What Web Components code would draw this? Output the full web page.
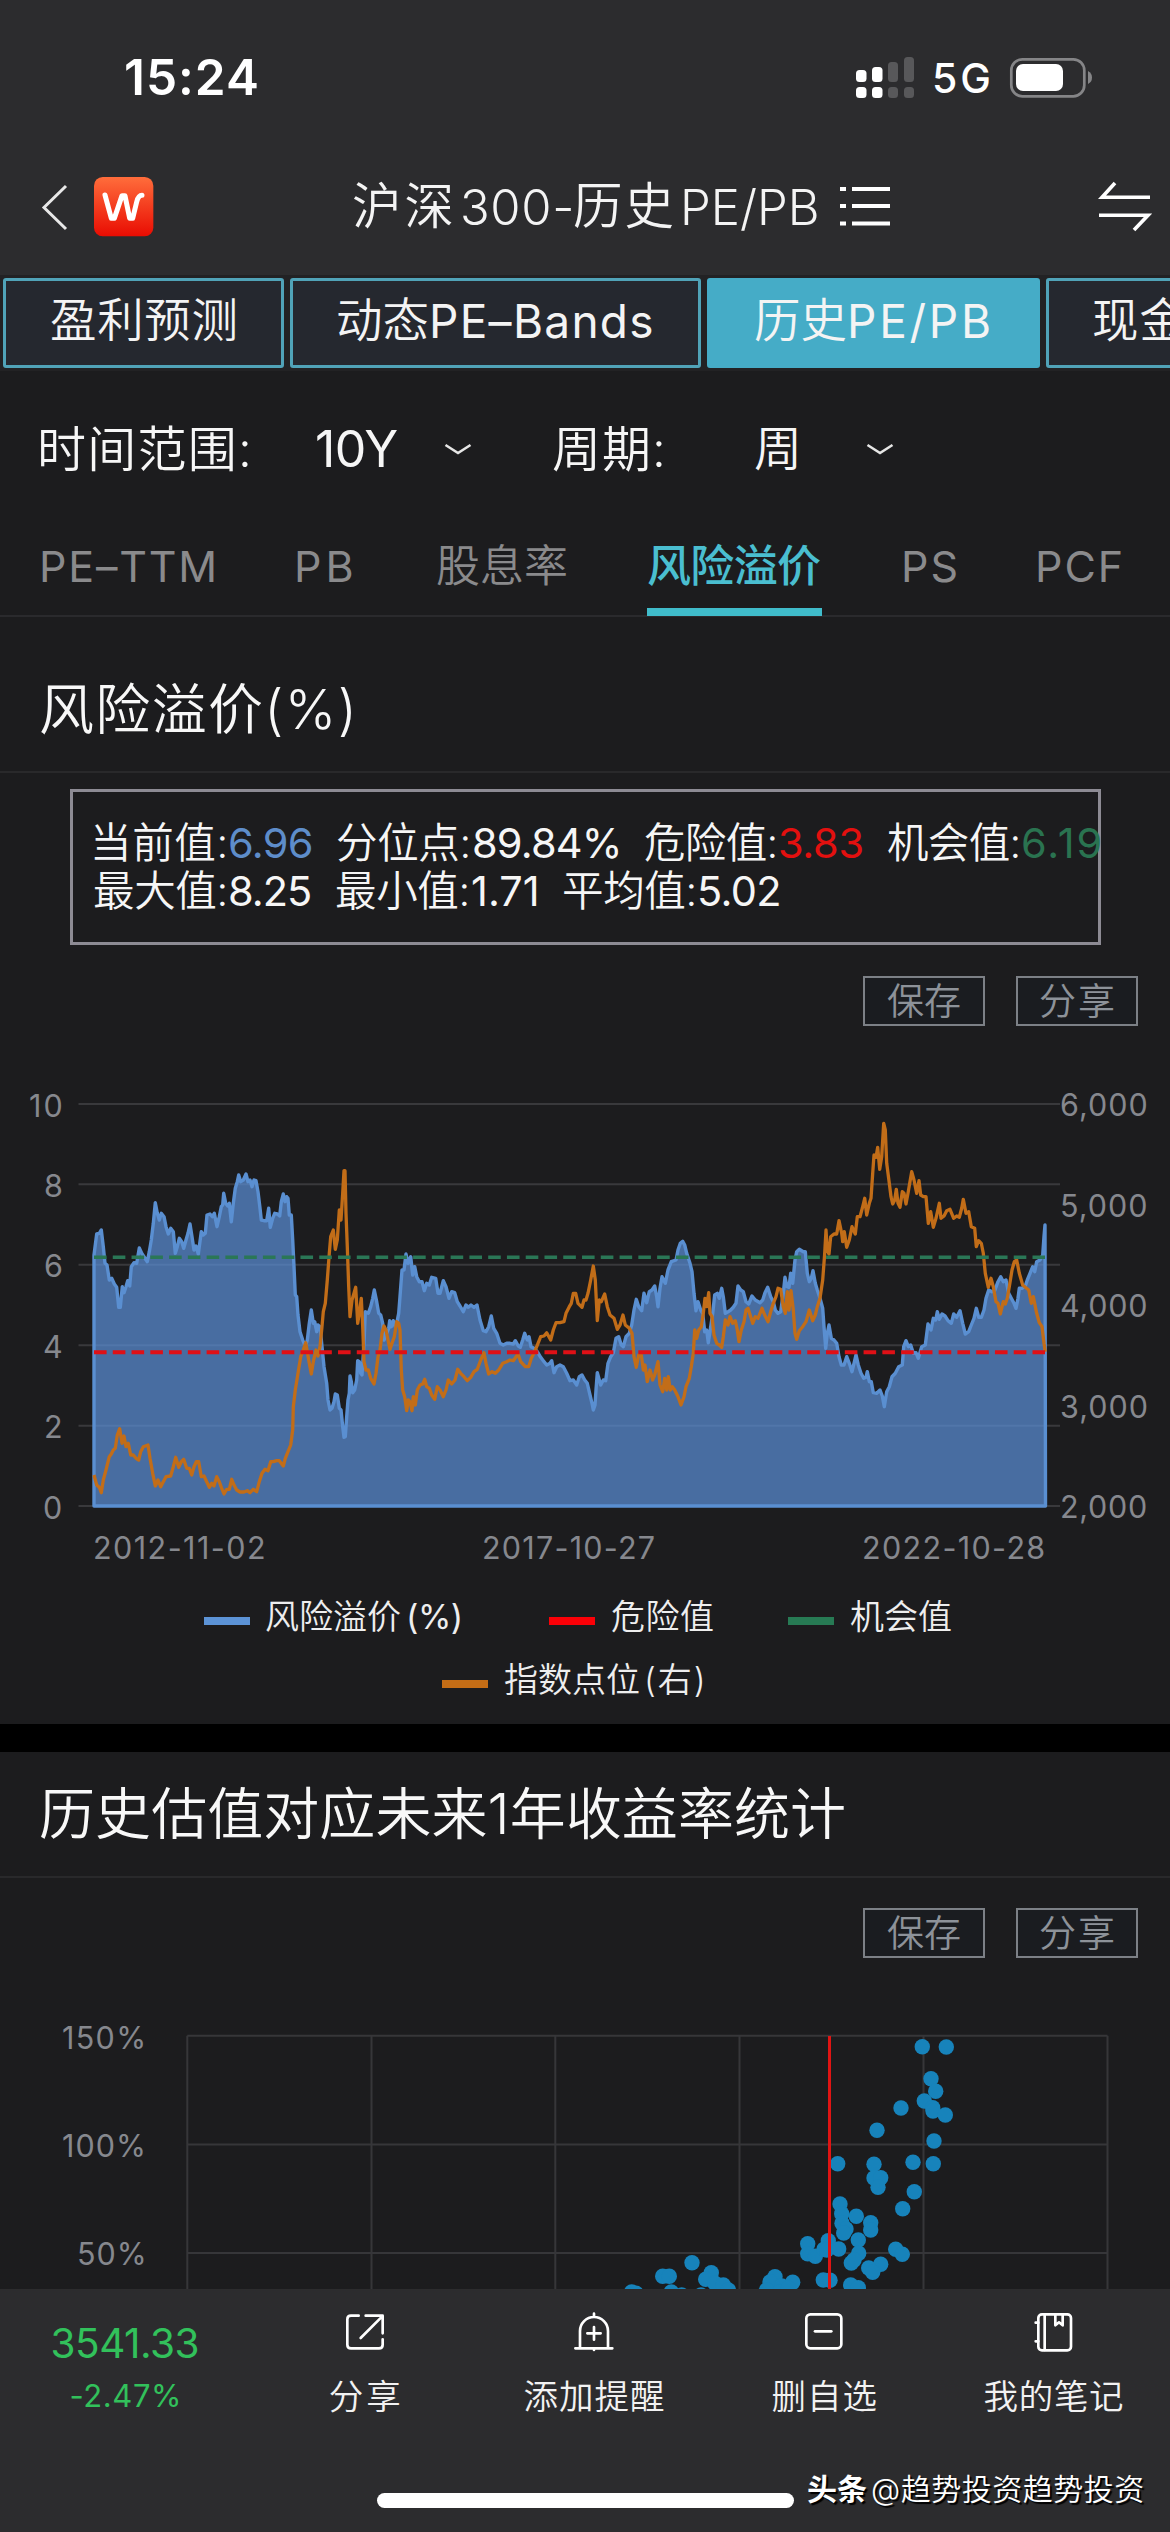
<!DOCTYPE html>
<html lang="zh-CN">
<head>
<meta charset="utf-8">
<meta name="viewport" content="width=1170">
<title>沪深300-历史PE/PB</title>
<style>
body{margin:0;background:#1c1c1e;width:1170px;height:2532px;overflow:hidden;font-family:Inter,"Noto Sans CJK SC",sans-serif;font-optical-sizing:none}
</style>
</head>
<body>
<valuation-page></valuation-page>
<script>
const FONT='Inter,"Noto Sans CJK SC",sans-serif';
const board=document.createElement('canvas');
board.width=960;board.height=100;
const pen=board.getContext('2d',{willReadFrequently:true});
/* Left bearing and width of the ink of a line, read from its pixels. */
function inkOf(t,weight,size){
  pen.font=`${weight} ${size}px ${FONT}`;
  pen.clearRect(0,0,960,100);
  pen.fillText(t,20,70);
  const d=pen.getImageData(0,0,960,100).data;
  let a=-1,z=-1;
  for(let x=0;x<960;x++)for(let y=0;y<100;y++)if(d[(y*960+x)*4+3]>70){if(a<0)a=x;z=x;break}
  return{left:a-20,width:z-a+1};
}
function define(name,html){
  customElements.define(name,class extends HTMLElement{
    connectedCallback(){
      if(this.shadowRoot)return;
      const r=this.attachShadow({mode:'open'});
      r.innerHTML=typeof html==='function'?html(this):html;
    }
  });
}

/* One line of text whose box hugs the ink: w = ink width, s = size, g = gap before it. */
customElements.define('ui-text',class extends HTMLElement{
  connectedCallback(){
    if(this.shadowRoot)return;
    const r=this.attachShadow({mode:'open'});
    const t=this.textContent,latin=/^[\x00-\x7f–]+$/.test(t);
    const s=+this.getAttribute('s'),w=+this.getAttribute('w'),b=this.getAttribute('b')||(latin?'400':'350');
    const ink=inkOf(t,b,s);
    const ls=(w-ink.width)/Math.max(1,[...t].length-1);
    r.innerHTML=`<style>:host{display:block;flex:none;width:${w}px;height:${s}px;margin-left:${this.getAttribute('g')||0}px;
      color:${this.getAttribute('c')||'inherit'};font:${b} ${s}px/1 ${FONT};font-optical-sizing:none;white-space:pre}
      span{display:block;width:max-content;margin-left:${-ink.left}px;letter-spacing:${ls}px}</style><span><slot></slot></span>`;
  }
});

define('ui-row',el=>`<style>:host{display:flex;align-items:center;box-sizing:border-box;height:${el.getAttribute('h')}px}</style><slot></slot>`);

define('status-bar',`<style>:host{display:flex;align-items:center;height:156px;color:#fff}
  svg{display:block;flex:none}</style>
  <ui-text g="126" w="131" s="49.5" b="600">15:24</ui-text>
  <svg style="margin-left:599px" width="60" height="44" viewBox="856 56 60 44">
    <g fill="#fff"><rect x="856" y="70" width="10.5" height="12" rx="3.5"/><rect x="872" y="67" width="10.5" height="15" rx="3.5"/>
    <rect x="856" y="87" width="10.5" height="11" rx="3.5"/><rect x="872" y="87" width="10.5" height="11" rx="3.5"/></g>
    <g fill="#58585a"><rect x="888" y="62" width="10" height="20" rx="3.5"/><rect x="904" y="57" width="10" height="25" rx="3.5"/>
    <rect x="888" y="87" width="10" height="11" rx="3.5"/><rect x="904" y="87" width="10" height="11" rx="3.5"/></g></svg>
  <ui-text g="19" w="54" s="41" b="450">5G</ui-text>
  <svg style="margin-left:20px" width="84" height="42" viewBox="1008 57 84 42">
    <rect x="1010.3" y="59.3" width="73" height="37" rx="11" fill="none" stroke="#858587" stroke-width="2.7"/>
    <rect x="1015" y="64" width="47" height="27" rx="7" fill="#fff"/><path d="M1087 71q4 2 4 6.500t-4 6.500z" fill="#858587"/></svg>`);

define('nav-bar',`<style>:host{display:flex;align-items:center;height:102px;color:#f4f4f4}svg{display:block;flex:none}</style>
  <svg style="margin-left:40px" width="30" height="54" viewBox="40 180 30 54"><path d="M66 186L44 207.500L66 229" fill="none" stroke="#e8e8e8" stroke-width="3"/></svg>
  <svg style="margin-left:24px" width="60" height="60" viewBox="222 53 180 180"><defs><linearGradient id="g" x2="0" y2="1"><stop stop-color="#ff6d3b"/><stop offset="1" stop-color="#e90c02"/></linearGradient></defs>
    <rect x="222" y="53" width="178" height="178" rx="26" fill="url(#g)"/><path d="M255 107L274 177H283L306 109H315L329 177H338L350 128Q355 108 366 108" fill="none" stroke="#fff" stroke-width="15" stroke-linecap="round" stroke-linejoin="round"/></svg>
  <ui-text g="200" w="97" s="49.5">沪深</ui-text><ui-text g="12" w="108" s="49" b="350">300-</ui-text><ui-text g="4" w="97" s="49.5">历史</ui-text><ui-text g="12" w="133" s="49" b="350">PE/PB</ui-text>
  <svg style="margin-left:23px" width="50" height="40" viewBox="840 187 50 40"><path d="M840 189h6M852 189h38M840 206h6M852 206h38M840 223.500h6M852 223.500h38" stroke="#fff" stroke-width="4"/></svg>
  <svg style="margin-left:208px" width="54" height="54" viewBox="1097 180 54 54"><path d="M1149 197.300H1101L1114 183M1098 215.300H1147L1133 230" fill="none" stroke="#fff" stroke-width="3.600"/></svg>`);

define('page-tab',el=>`<style>:host{display:flex;align-items:center;box-sizing:border-box;flex:none;height:90px;padding-bottom:5px;
  border:3px solid ${el.hasAttribute('on')?'#45acc7':'#50a3b8'};background:${el.hasAttribute('on')?'#45acc7':'#25282f'};color:#f4f4f4;border-radius:3px;width:${el.getAttribute('width')}px}</style><slot></slot>`);
define('page-tabs',`<style>:host{display:flex;height:96px;padding:3px;box-sizing:border-box;gap:6px;background:#222224;overflow:hidden}</style>
  <page-tab width="281"><ui-text g="46" w="183" s="46.5">盈利预测</ui-text></page-tab>
  <page-tab width="411"><ui-text g="45" w="89" s="46.500">动态</ui-text><ui-text g="6" w="218" s="46">PE–Bands</ui-text></page-tab>
  <page-tab width="333" on><ui-text g="46" w="89" s="46.500">历史</ui-text><ui-text g="6" w="138" s="46">PE/PB</ui-text></page-tab>
  <page-tab width="300"><ui-text g="45" w="90" s="46.500">现金</ui-text></page-tab>`);

define('chevron-down',el=>`<style>:host{display:block;flex:none;margin-left:${el.getAttribute('g')}px}svg{display:block}</style>
  <svg width="28" height="14" viewBox="0 0 28 14"><path d="M1.500 3L14 11L26.500 3" fill="none" stroke="#e6e6e6" stroke-width="2.600"/></svg>`);
define('filter-row',`<style>:host{display:flex;align-items:center;height:156px;color:#f6f6f6}</style>
  <ui-text g="41" w="207" s="49">时间范围:</ui-text><ui-text g="69" w="80" s="50">10Y</ui-text><chevron-down g="47"></chevron-down>
  <ui-text g="82" w="108" s="49">周期:</ui-text><ui-text g="94" w="43" s="48">周</ui-text><chevron-down g="67"></chevron-down>`);

define('metric-tab',el=>`<style>:host{display:flex;flex-direction:column;justify-content:space-between;flex:none;height:89px;margin-left:${el.getAttribute('g')}px}
  div{height:78px;display:flex;align-items:center;padding:0 ${el.hasAttribute('on')?2:0}px}i{display:block;height:8px;background:${el.hasAttribute('on')?'#40bccb':'none'}}</style><div><slot></slot></div><i></i>`);
define('metric-tabs',`<style>:host{display:flex;box-sizing:border-box;height:90px;color:#8a8a8c;border-bottom:2px solid #2a2a2d}</style>
  <metric-tab g="43"><ui-text w="171" s="43">PE–TTM</ui-text></metric-tab>
  <metric-tab g="84"><ui-text w="53" s="43">PB</ui-text></metric-tab>
  <metric-tab g="87"><ui-text w="128" s="44">股息率</ui-text></metric-tab>
  <metric-tab g="81" on><ui-text w="171" s="44" b="450" c="#4abed0">风险溢价</ui-text></metric-tab>
  <metric-tab g="83"><ui-text w="51" s="43">PS</ui-text></metric-tab>
  <metric-tab g="83"><ui-text w="82" s="43">PCF</ui-text></metric-tab>`);

define('section-title',`<style>:host{display:flex;align-items:center;box-sizing:content-box;height:124px;border-bottom:2px solid #29292b;color:#f8f8f8;padding-left:41px}</style><slot></slot>`);

define('stat-box',`<style>:host{display:block;box-sizing:border-box;margin:16px 0 0 70px;width:1031px;height:156px;border:3px solid #8d8b94;padding:28px 0 0 22px;color:#f6f6f6}</style>
  <ui-row h="48"><ui-text w="130" s="41.5">当前值:</ui-text><ui-text g="5" w="81" s="41.5" c="#5e8dca">6.96</ui-text>
  <ui-text g="27" w="130" s="41.5">分位点:</ui-text><ui-text g="6" w="144" s="41.5">89.84%</ui-text>
  <ui-text g="27" w="130" s="41.5">危险值:</ui-text><ui-text g="5" w="82" s="41.5" c="#e3100f">3.83</ui-text>
  <ui-text g="26" w="130" s="41.5">机会值:</ui-text><ui-text g="5" w="77" s="41.5" c="#2a7350">6.19</ui-text></ui-row>
  <ui-row h="48"><ui-text w="130" s="41.5">最大值:</ui-text><ui-text g="5" w="80" s="41.5">8.25</ui-text>
  <ui-text g="27" w="130" s="41.5">最小值:</ui-text><ui-text g="6" w="63" s="41.5">1.71</ui-text>
  <ui-text g="28" w="130" s="41.5">平均值:</ui-text><ui-text g="6" w="79" s="41.5">5.02</ui-text></ui-row>`);

define('chart-actions',`<style>:host{display:flex;justify-content:flex-end;gap:31px;padding-right:32px;height:50px;color:#8d9299}
  div{box-sizing:border-box;width:122px;border:2px solid #7c8086;background:#1a1c20;display:flex;align-items:center;justify-content:center}</style>
  <div><ui-text w="72" s="37">保存</ui-text></div><div><ui-text w="72" s="37">分享</ui-text></div>`);

/* Traced series: each run starts at pixel x0; its x,y pairs are thirds of a pixel. */
const premium=[[60,'102,525 110,462 118,460 124,450 130,500 135,550 141,555 148,600 155,595 163,612 170,622 176,682 181,682 187,620 192,638 198,620 203,602 209,618 214,560 222,548 230,550 238,504 245,520 252,530 262,545 268,515 274,480 280,430 286,368 292,400 298,420 304,400 312,410 318,440 325,462 332,445 340,455 346,520 352,500 358,475 365,485 371,505 378,480 384,460 390,432 396,470 402,510 408,498 415,522 424,455 430,465 436,460 441,405 450,402 457,410 463,400 471,440 478,410 484,380 488,375 491,340 497,370 503,378 508,370 514,425 520,370 526,325 532,305 536,285 542,305 550,300 558,282 564,305 570,300 576,320 582,300 588,302 594,335 600,385 604,420 612,422 620,422 626,385 631,442 638,415 644,400 652,402 659,408 664,365 670,342 675,365 680,350 684,355 688,405 694,405 698,480 702,560 706,645 710,650 714,705 720,755 728,780 736,800 742,780 748,730 754,690 760,730 764,725 770,755 774,735 780,740 786,800 792,860 800,910 804,960 810,990 816,985 822,965 826,942 832,945 838,985 843,990 848,1040 852,1072 856,1070 860,1010 864,960 868,940 870,888 874,905 878,938 884,930 890,900 893,842 898,845 902,880 906,885 912,790 916,695 925,700 932,680 938,655 943,630 950,665 956,700 962,705 968,730 972,780 980,760 986,745 989,722 994,740 1000,722 1006,740 1010,730 1016,700 1020,650 1026,570'],
[400,'12,570 18,522 24,550 32,530 38,585 44,560 50,590 58,605 66,605 73,632 80,610 88,615 95,592 107,595 114,640 120,640 130,602 138,620 147,655 155,635 164,638 172,665 180,678 190,695 198,675 205,682 213,675 222,682 231,675 240,720 250,752 258,755 266,740 274,708 281,745 290,760 300,790 310,795 320,790 330,790 340,792 346,782 355,798 361,802 368,780 374,760 382,780 387,770 393,800 402,805 412,815 422,832 432,845 440,855 450,850 455,842 462,878 470,860 480,855 490,860 500,880 510,902 520,900 530,915 538,890 546,885 554,900 562,910 570,945 576,970 580,990 585,975 588,930 592,878 598,900 602,915 610,900 617,902 624,850 632,830 640,818 648,775 656,770 664,795 670,800 678,770 688,760 695,735 702,690 709,658 716,680 725,692 732,640 740,668 748,635 756,630 764,618 770,650 774,680 780,625 786,590 796,610 804,570 814,545 828,540 834,510 841,490 848,484 854,495 860,520 870,550 876,575 882,640 888,692 894,665 902,690 908,700 914,755 920,750 925,788 932,740 938,700 944,645 952,640 958,655 965,625 970,650 976,700 984,695 992,690 1000,682 1008,670 1014,618 1022,630 1030,635 1038,665 1046,672 1056,648 1066,660 1080,668 1088,660 1095,638 1103,622 1112,650 1120,665 1126,690'],
[740,'114,700 122,695 130,640 135,592 141,620 147,622 152,580 158,610 165,540 170,515 178,508 190,515 196,515 202,580 208,605 214,595 219,572 226,610 232,630 240,655 248,685 252,740 257,805 262,760 267,735 274,775 282,780 290,790 297,830 304,855 312,855 320,830 328,850 336,875 342,850 348,825 355,855 363,880 371,895 378,892 382,875 388,905 394,905 400,938 410,940 420,930 427,948 433,980 440,935 448,920 456,890 466,880 476,860 487,855 491,800 498,782 505,800 512,795 520,820 528,818 535,835 545,800 556,795 564,732 573,750 580,715 587,720 592,695 598,718 606,702 615,708 624,722 634,730 641,702 650,712 660,692 668,730 676,762 686,755 694,735 702,715 709,685 716,712 724,712 732,690 738,655 746,630 756,635 764,632 774,605 782,590 790,605 798,600 806,640 814,655 822,670 828,685 834,655 838,625 846,625 856,618 862,600 870,580 878,560 884,575 890,545 900,540 908,525 912,470 915,435']];
const index=[[60,'102,1185 110,1215 118,1222 124,1238 130,1200 138,1170 148,1130 154,1122 160,1110 166,1105 172,1065 179,1046 186,1090 192,1068 198,1100 205,1090 212,1125 220,1125 228,1135 236,1140 242,1115 250,1100 264,1095 270,1135 278,1180 286,1218 294,1200 302,1220 310,1205 318,1190 332,1188 340,1160 347,1132 356,1162 364,1145 371,1138 380,1165 388,1165 395,1185 402,1160 409,1145 416,1145 424,1190 432,1188 440,1205 448,1222 455,1210 462,1218 470,1190 478,1205 485,1225 492,1242 500,1228 508,1228 515,1198 522,1215 530,1230 540,1236 552,1236 562,1232 570,1238 580,1228 590,1235 598,1205 606,1180 615,1168 624,1172 632,1145 640,1145 650,1142 658,1142 670,1158 676,1135 684,1115 692,1095 698,1050 700,980 706,930 714,880 722,830 730,810 737,788 742,815 748,850 754,882 760,845 768,810 774,828 780,800 786,740 790,695 796,670 802,600 808,520 812,470 820,450 826,508 832,480 838,390 843,420 848,340 852,272 855,272 858,400 862,500 866,620 870,710 876,660 882,640 887,622 893,730 898,700 904,655 908,740 912,845 918,870 925,870 932,895 942,912 948,880 954,830 960,810 966,760 972,738 978,750 984,780 990,808 996,790 1003,770 1010,725 1016,730'],
[400,'0,750 4,870 8,930 14,950 20,992 25,960 30,965 36,992 40,950 46,975 52,930 60,915 68,912 74,898 80,920 88,925 95,945 104,958 112,920 120,930 130,950 138,930 145,900 155,912 165,900 173,868 182,880 192,890 202,902 212,892 222,875 232,868 242,840 252,818 258,850 266,882 276,875 286,880 296,870 308,850 320,845 330,840 340,842 354,822 362,845 376,860 386,860 394,835 404,815 414,790 422,770 432,768 440,758 452,780 460,750 468,728 480,728 492,725 498,700 508,680 514,670 520,640 527,640 534,670 546,682 552,660 558,660 564,640 572,600 580,558 586,600 592,722 598,660 604,665 614,642 622,680 630,705 642,715 652,748 660,735 669,705 676,735 688,745 696,760 702,830 709,862 716,825 724,825 730,870 735,855 742,905 750,870 758,900 764,885 774,845 780,915 788,935 794,895 800,930 805,890 811,930 817,920 824,930 834,950 843,975 852,950 858,920 868,895 874,860 880,820 884,750 890,775 896,750 904,740 910,700 915,655 920,680 926,638 930,700 936,710 942,765 950,790 958,795 965,802 970,770 976,720 984,735 990,710 998,730 1006,722 1012,750 1017,785 1024,750 1032,725 1038,690 1044,685 1052,710 1058,730 1066,710 1074,715 1086,685 1094,705 1104,725 1112,695 1120,670 1128,650'],
[740,'114,625 122,628 130,680 136,700 142,635 147,690 153,632 160,690 165,760 170,778 178,752 188,740 198,725 208,690 218,722 226,705 232,680 240,655 248,600 254,520 258,450 262,510 267,522 272,470 282,462 290,462 297,422 305,460 308,485 313,455 320,502 328,480 336,440 346,462 352,410 360,410 367,385 374,355 380,405 388,370 393,355 398,280 402,225 408,232 413,202 419,268 425,230 431,130 436,150 440,250 448,310 453,350 458,372 464,360 469,328 474,370 480,382 487,335 492,340 498,372 504,340 509,310 515,275 522,300 530,340 537,302 542,345 550,350 558,350 565,430 572,395 580,442 588,415 598,370 603,415 612,408 620,392 630,388 641,415 650,408 658,412 665,385 670,358 678,400 686,395 694,440 704,445 709,500 716,482 724,490 730,520 736,580 745,622 753,595 760,620 768,665 774,670 781,702 790,665 796,672 802,655 808,620 816,570 823,545 830,540 838,580 848,615 856,622 866,630 874,670 880,650 890,700 898,728 906,740 912,790 916,815']];
const trace=runs=>runs.map(([x0,s])=>s.split(' ').map(p=>{const[x,y]=p.split(',');return (x0+x/3).toFixed(1)+' '+(1080+y/3).toFixed(1)}).join('L')).join('L');
/* Axis label: x is the ink edge, y the middle of the digits. */
function label(t,x,y,w,s,anchor='start'){
  const ink=inkOf(t,400,s),n=t.length;
  const ls=n>1?(w-ink.width)/(n-1):0, left=anchor==='end'?x-(n>1?w:ink.width):x;
  return `<text x="${left-ink.left}" y="${y+s*.3635}" font-size="${s}" letter-spacing="${ls}">${t}</text>`;
}
define('premium-chart',()=>{
  const gy=[1104,1184.300,1264.700,1345.300,1425.700,1506],line=trace(premium);
  return `<style>:host{display:block;height:564px}svg{display:block}text{font-family:${FONT};fill:#86888e}</style>
  <svg width="1170" height="564" viewBox="0 1026 1170 564">
  <g stroke="#39393c" stroke-width="2">${gy.map(y=>`<path d="M78.500 ${y}H1060"/>`).join('')}</g>
  <path d="M94 1506L${line}L1045.500 1506Z" fill="#5b90d8" fill-opacity=".7"/>
  <path d="M94 1506L${line}L1045.500 1506Z" fill="none" stroke="#5a8fd1" stroke-width="3.400" stroke-linejoin="round"/>
  <path d="${'M'+trace(index)}" fill="none" stroke="#c26d18" stroke-width="3.300" stroke-linejoin="round"/>
  <path d="M94 1257.300H1045" stroke="#2a7756" stroke-width="3.400" stroke-dasharray="12.600 6.170"/>
  <path d="M94 1352.300H1045" stroke="#df1016" stroke-width="4" stroke-dasharray="12.600 6.170"/>
  ${['10','8','6','4','2','0'].map((t,i)=>label(t,61,gy[i]+1.500,31,30.500,'end')).join('')}
  ${['6,000','5,000','4,000','3,000','2,000'].map((t,i)=>label(t,1062,1105+i*100.500,84,30.500)).join('')}
  ${label('2012-11-02',95,1547.500,169,30.500)}${label('2017-10-27',484,1547.500,170,30.500)}${label('2022-10-28',864,1547.500,179,30.500)}
  </svg>`;
});

define('legend-item',el=>`<style>:host{display:flex;align-items:center;flex:none;gap:17px;margin-left:${el.getAttribute('g')}px}
  i{display:block;width:46px;height:8px;margin-top:8px;background:${el.getAttribute('color')}}div{display:flex}</style><i></i><div><slot></slot></div>`);
define('chart-legend',`<style>:host{display:flex;flex-direction:column;gap:9px;height:134px;color:#eee}</style>
  <ui-row h="54"><legend-item g="204" color="#5c93d6"><ui-text w="133" s="34">风险溢价</ui-text><ui-text g="9" w="51" s="34">(%)</ui-text></legend-item>
  <legend-item g="89" color="#fb0007"><ui-text w="101" s="34">危险值</ui-text></legend-item>
  <legend-item g="75" color="#277a54"><ui-text w="100" s="34">机会值</ui-text></legend-item></ui-row>
  <ui-row h="54"><legend-item g="442" color="#c46d16"><ui-text w="134" s="34">指数点位</ui-text><ui-text g="9" w="54" s="34">(右)</ui-text></legend-item></ui-row>`);

const dots='967,140 1039,141 993,236 1007,274 973,303 998,323 999,333 1036,345 903,324 831,391 1002,423 713,491 822,493 939,487 1000,491 822,534 842,533 834,562 943,575 908,626 720,612 725,641 769,649 726,670 812,668 812,690 738,687 731,699 775,720 685,722 623,731 623,761 646,769 672,748 680,750 716,747 776,760 754,789 762,780 887,748 907,763 842,793 806,804 818,817 276,788 188,829 208,829 334,818 317,838 345,850 370,855 385,870 95,876 108,880 214,876 245,885 303,885 525,830 510,846 578,847 545,858 500,870 490,885 540,875 565,865 670,840 690,841 752,855 775,863';
define('return-scatter',()=>`<style>:host{display:block;height:331px}svg{display:block}text{font-family:${FONT};fill:#86888e}</style>
  <svg width="1170" height="331" viewBox="0 1958 1170 331">
  <path d="M187.300 2035.700H1107.500M187.300 2144.500H1107.500M187.300 2253H1107.500M187.300 2035.700V2289M371.500 2035.700V2289M555.300 2035.700V2289M739.500 2035.700V2289M923.500 2035.700V2289M1107.500 2035.700V2289" stroke="#363639" stroke-width="2" fill="none"/>
  <g fill="#1783bb">${dots.split(' ').map(p=>{const[x,y]=p.split(',');return `<circle cx="${(600+x/3).toFixed(1)}" cy="${(2000+y/3).toFixed(1)}" r="7.700"/>`}).join('')}</g>
  <path d="M829.500 2036V2289" stroke="#e01413" stroke-width="3"/>
  ${label('150%',143,2037.500,80,30.500,'end')}${label('100%',143,2145.500,80,30.500,'end')}${label('50%',143,2254,64,30.500,'end')}</svg>`);

define('tool-item',`<style>:host{display:flex;flex-direction:column;align-items:center;width:229.600px;flex:none;color:#f2f2f2;padding-top:23px}
  ::slotted(svg){display:block;width:40px;height:40px;fill:none;stroke:#fff;stroke-width:8;stroke-linecap:round;stroke-linejoin:round}
  div{height:90px;display:flex;align-items:center}</style><slot name="icon"></slot><div><slot></slot></div>`);
define('quote-value',`<style>:host{display:flex;flex-direction:column;align-items:center;width:250px;flex:none;color:#32c15b;padding-top:35px}</style>
  <ui-row h="40"><ui-text w="145" s="40.500">3541.33</ui-text></ui-row><ui-row h="62"><ui-text w="107" s="31">-2.47%</ui-text></ui-row>`);
define('bottom-bar',`<style>:host{display:flex;flex-direction:column;height:243px;background:#2c2c2e}
  .tools{display:flex;height:180px}.foot{display:flex;height:40px;align-items:center}
  .home{width:417px;height:15px;border-radius:8px;background:#fff;margin:22px 0 0 377px;flex:none}
  .mark{display:flex;color:#fff;text-shadow:2px 2px 1px #000;font-size:28px}</style>
  <div class="tools"><quote-value></quote-value>
  <tool-item><svg slot="icon" viewBox="74 39 120 120"><path d="M115 50H92Q81 50 81 61V137Q81 148 92 148H176Q187 148 187 137V121M136 50H187V103M185 53L121 117"/></svg><ui-text w="68" s="34.500">分享</ui-text></tool-item>
  <tool-item><svg slot="icon" viewBox="765 39 120 120"><path d="M783 147V96A42 42 0 0 1 867 96V147M769 148H880M825 44V54M825 150V153M825 84V122M805 103H845"/></svg><ui-text w="138" s="34.500">添加提醒</ui-text></tool-item>
  <tool-item><svg slot="icon" viewBox="1456 39 120 120"><rect x="1463" y="46" width="105" height="102" rx="12"/><path d="M1489 97H1538"/></svg><ui-text w="103" s="34.500">删自选</ui-text></tool-item>
  <tool-item><svg slot="icon" viewBox="0 0 120 120"><rect x="13" y="7" width="98" height="108" rx="11"/><path d="M32 8V114M64 9V40L75 31L86 40V9M5 32H13M5 88H13"/></svg><ui-text w="138" s="34.500">我的笔记</ui-text></tool-item></div>
  <div class="foot"><div class="home"></div><div class="mark"><ui-text g="14" w="58" s="30" b="700">头条</ui-text><ui-text g="7" w="269" s="30">@趋势投资趋势投资</ui-text></div></div>`);

define('valuation-page',`<style>:host{display:flex;flex-direction:column;width:1170px;height:2532px;background:#1c1c1e;overflow:hidden}
  header{background:#2c2c2e;height:275px}.band{height:28px;background:#000;flex:none}.a1{margin-top:31px}.a2{margin-top:30px}
  header,page-tabs,filter-row,metric-tabs,section-title,stat-box,chart-actions,premium-chart,chart-legend,return-scatter,bottom-bar{flex:none}
  .first{margin-top:30px}</style>
  <header><status-bar></status-bar><nav-bar></nav-bar></header>
  <page-tabs></page-tabs><filter-row></filter-row><metric-tabs></metric-tabs>
  <section-title class="first"><ui-text w="310" s="55">风险溢价(%)</ui-text></section-title>
  <stat-box></stat-box><chart-actions class="a1"></chart-actions><premium-chart></premium-chart><chart-legend></chart-legend>
  <div class="band"></div>
  <section-title><ui-text w="803" s="56">历史估值对应未来1年收益率统计</ui-text></section-title>
  <chart-actions class="a2"></chart-actions><return-scatter></return-scatter><bottom-bar></bottom-bar>`);
</script>
</body>
</html>
